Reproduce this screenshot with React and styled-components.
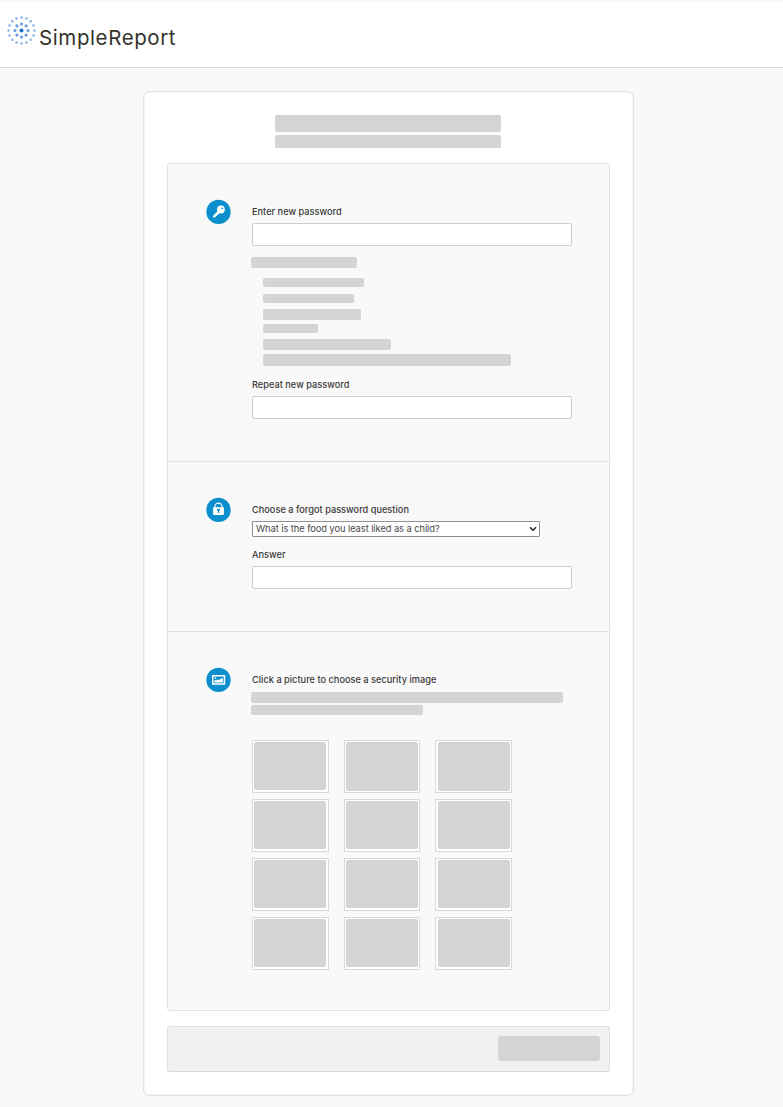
import React from "react";
import styled, { createGlobalStyle } from "styled-components";

const GlobalStyle = createGlobalStyle`
  *, *::before, *::after { box-sizing: border-box; }
  body {
    margin: 0;
    background: #f9f9f9;
    font-family: Inter, "Liberation Sans", sans-serif;
    color: #3a3a3a;
  }
`;

const Page = styled.div`
  height: 1107px;
  display: flex;
  flex-direction: column;
  overflow: hidden;
`;

const Header = styled.header`
  flex: none;
  height: 68px;
  padding: 14px 0 0 6px;
  display: flex;
  align-items: flex-start;
  background: #fff;
  border-top: 1px solid #f8f8f8;
  border-bottom: 1px solid #d7d8d8;
`;

const Wordmark = styled.span`
  margin: 9px 0 0 2px;
  font: 400 20.5px/28px Inter, sans-serif;
  letter-spacing: ${(p) => p.$tracking}px;
  color: #33332c;
`;

const Card = styled.main`
  flex: none;
  width: 491px;
  height: 1005px;
  margin: 23px 0 0 143px;
  padding: 23px 23px 0;
  background: #fff;
  border: 1px solid #e0e1e1;
  border-radius: 6px;
  box-shadow: inset 0 0 0 0.5px #ebebeb;
`;

const Titles = styled.div`
  display: flex;
  flex-direction: column;
  gap: 3px;
  height: 48px;
  padding-left: 108px;
`;

const Bar = styled.div`
  flex: none;
  width: ${(p) => p.$w}px;
  height: ${(p) => p.$h}px;
  margin-top: ${(p) => p.$top || 0}px;
  margin-left: ${(p) => p.$left || 0}px;
  border-radius: ${(p) => p.$radius || 2}px;
  background: #d4d4d4;
`;

const Panel = styled.div`
  height: 848px;
  border: 1px solid #e3e3e3;
  border-radius: 3px;
  background: #f9f9f9;
`;

const Section = styled.section`
  display: flex;
  height: ${(p) => p.$h}px;
  padding: 35px 38px 0;
  border-bottom: ${(p) => (p.$last ? "none" : "1px solid #e2e2e2")};
`;

const Badge = styled.div`
  flex: none;
  width: 25px;
  height: 25px;
  margin-right: 20px;
  svg { display: block; overflow: visible; }
`;

const Fields = styled.div`
  flex: 1;
  padding: 5px 0 0 1px;
`;

const Label = styled.label`
  display: block;
  height: 16px;
  margin-top: ${(p) => p.$top || 0}px;
  font-size: 9.2px;
  font-weight: 550;
  line-height: 16px;
  letter-spacing: 0.02px;
  white-space: nowrap;
`;

const Input = styled.input`
  display: block;
  width: 320px;
  height: 23px;
  margin: ${(p) => p.$top || 0}px 0 0;
  padding: 0 6px;
  border: 1px solid #cfcfcf;
  border-radius: 2px;
  background: #fff;
`;

const Select = styled.div`
  display: flex;
  align-items: center;
  justify-content: space-between;
  width: 288px;
  height: 16px;
  margin-top: 3px;
  padding: 0 2px 0 3px;
  border: 1px solid #919191;
  border-radius: 1px;
  background: #fff;
  font-size: 9.3px;
  line-height: 14px;
  letter-spacing: ${(p) => p.$tracking}px;
  color: #484848;
`;

const Gallery = styled.div`
  display: grid;
  grid-template-columns: 77px 76px 77px;
  grid-auto-rows: 53px;
  gap: 6px 15px;
  margin-top: 25px;
`;

const Frame = styled.div`
  padding: 1px 0 0 ${(p) => p.$inset}px;
  border: 1px solid #d9d9d9;
  background: #fff;
`;

const Footer = styled.footer`
  display: flex;
  justify-content: flex-end;
  height: 46px;
  margin-top: 15px;
  padding: 9px 9px 0;
  border: 1px solid #e0e0e0;
  border-bottom-color: #d9d9d9;
  border-radius: 3px;
  background: #f1f1f1;
`;

const rings = [
  { r: 6.5, n: 8, size: 1.6, fill: "#6a9cdb" },
  { r: 13, n: 16, size: 1.25, fill: "#86b2e5" },
];

function Logo() {
  return (
    <svg width="31" height="31" viewBox="-15.5 -15.5 31 31">
      <circle r="2" fill="#1673cf" />
      {rings.map(({ r, n, size, fill }) =>
        Array.from({ length: n }, (_, i) => {
          const a = (i * 2 * Math.PI) / n;
          return <circle key={`${n}-${i}`} cx={r * Math.cos(a)} cy={r * Math.sin(a)} r={size} fill={fill} />;
        })
      )}
    </svg>
  );
}

function BadgeIcon({ children }) {
  return (
    <svg width="25" height="25" viewBox="0 -0.4 25 25">
      <circle cx="12.5" cy="12.5" r="12.2" fill="#0b90cd" />
      {children}
    </svg>
  );
}

function KeyIcon() {
  return (
    <BadgeIcon>
      <path d="M12.1 11.9 7.3 16.6v1.1h1.6l1-.9.2-.8.9-.1 2.3-2.6" fill="#fff" stroke="#fff" strokeWidth=".8" strokeLinejoin="round" />
      <circle cx="14.9" cy="10.1" r="3.9" fill="#fff" />
      <circle cx="16.2" cy="8.9" r=".9" fill="#0b90cd" />
    </BadgeIcon>
  );
}

function LockIcon() {
  return (
    <BadgeIcon>
      <path d="M8.9 11V9.3a3.6 3.6 0 0 1 7.2 0V11" fill="none" stroke="#fff" strokeWidth="1.1" />
      <rect x="7.1" y="9.8" width="10.8" height="7.7" rx=".8" fill="#fff" />
      <path d="M11 11.6h3v1.6h-.8v2.5h-1.4v-2.5H11z" fill="#0b90cd" />
    </BadgeIcon>
  );
}

function PictureIcon() {
  return (
    <BadgeIcon>
      <path fillRule="evenodd" d="M6 7.6h13.2v9.7H6zM7.5 9.1v6.7h10.2V9.1z" fill="#fff" />
      <path d="M8.3 15v-2.4l1.8.5 1.5-1.1 1.5.8 1.9-2 1.9.6V15z" fill="#fff" />
      <circle cx="9.5" cy="10.7" r=".8" fill="#fff" />
    </BadgeIcon>
  );
}

const requirements = [
  { w: 101, h: 9, top: 10 },
  { w: 91, h: 9, top: 7 },
  { w: 98, h: 11, top: 6 },
  { w: 55, h: 9, top: 4 },
  { w: 128, h: 11, top: 6 },
  { w: 248, h: 12, top: 4 },
];

export default function App() {
  return (
    <>
      <GlobalStyle />
      <Page>
        <Header>
          <Logo />
          <Wordmark $tracking={0.6}>SimpleReport</Wordmark>
        </Header>
        <Card>
          <Titles>
            <Bar $w={226} $h={17} />
            <Bar $w={226} $h={13} />
          </Titles>
          <Panel>
            <Section $h={298}>
              <Badge><KeyIcon /></Badge>
              <Fields>
                <Label>Enter new password</Label>
                <Input $top={3} />
                <Bar $w={106} $h={11} $top={11} $left={-1} />
                {requirements.map(({ w, h, top }) => (
                  <Bar key={w} $w={w} $h={h} $top={top} $left={11} />
                ))}
                <Label $top={11}>Repeat new password</Label>
                <Input $top={3} />
              </Fields>
            </Section>
            <Section $h={170}>
              <Badge><LockIcon /></Badge>
              <Fields>
                <Label>Choose a forgot password question</Label>
                <Select $tracking={-0.06}>
                  What is the food you least liked as a child?
                  <svg width="8" height="6" viewBox="0 0 8 6">
                    <path d="m1 1.3 3 3 3-3" fill="none" stroke="#222" strokeWidth="1.5" />
                  </svg>
                </Select>
                <Label $top={10}>Answer</Label>
                <Input $top={3} />
              </Fields>
            </Section>
            <Section $h={378} $last>
              <Badge><PictureIcon /></Badge>
              <Fields>
                <Label>Click a picture to choose a security image</Label>
                <Bar $w={312} $h={11} $top={4} $left={-1} />
                <Bar $w={172} $h={10} $top={2} $left={-1} />
                <Gallery>
                  {Array.from({ length: 12 }, (_, i) => (
                    <Frame key={i} $inset={i % 3 === 2 ? 2 : 1}>
                      <Bar $w={72} $h={i === 1 || i === 2 ? 49 : 48} />
                    </Frame>
                  ))}
                </Gallery>
              </Fields>
            </Section>
          </Panel>
          <Footer>
            <Bar $w={102} $h={25} $radius={3} />
          </Footer>
        </Card>
      </Page>
    </>
  );
}
